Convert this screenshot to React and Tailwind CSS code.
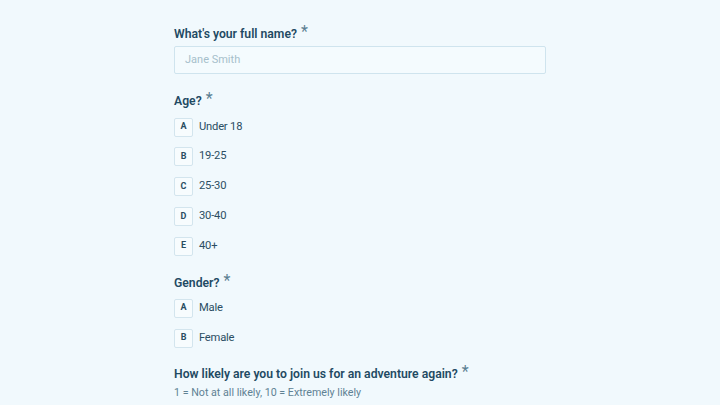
import React from "react";

function Heading({ children, className = "" }) {
  return (
    <div className={"flex items-start h-5 text-[12.2px] leading-5 font-semibold text-[#1f4a63] " + className}>
      <span>{children}</span>
      <span className="ml-[4px] text-[16px] leading-[16px] text-[#5b7f92] font-normal">*</span>
    </div>
  );
}

function Option({ letter, label }) {
  return (
    <div className="flex items-center h-[18px]">
      <div className="w-[19px] h-[19px] flex items-center justify-center border border-[#d3e5ee] bg-[#f7fcfe] rounded-[2px] text-[9px] font-bold text-[#2a4d62]">
        {letter}
      </div>
      <span className="ml-[6px] text-[11.2px] tracking-[-0.2px] text-[#2b4e63]">{label}</span>
    </div>
  );
}

export default function App() {
  return (
    <div className="w-[720px] h-[405px] overflow-hidden bg-[#f1f9fd]" style={{ fontFamily: "Roboto, 'Noto Sans', sans-serif" }}>
      <div className="ml-[174px] w-[372px] pt-[24px]">
        <Heading>What's your full name?</Heading>
        <div className="mt-[2px] h-[28px] w-[372px] border border-[#cfe4ee] bg-[#f4fbfe] rounded-[2px] flex items-center px-[10px] text-[11px] text-[#a6bfcb]">
          Jane Smith
        </div>
        <Heading className="mt-[17px]">Age?</Heading>
        <div className="mt-[7px] flex flex-col gap-[11.75px]">
          <Option letter="A" label="Under 18" />
          <Option letter="B" label="19-25" />
          <Option letter="C" label="25-30" />
          <Option letter="D" label="30-40" />
          <Option letter="E" label="40+" />
        </div>
        <Heading className="mt-[18px]">Gender?</Heading>
        <div className="mt-[6px] flex flex-col gap-[12px]">
          <Option letter="A" label="Male" />
          <Option letter="B" label="Female" />
        </div>
        <Heading className="mt-[17px]">How likely are you to join us for an adventure again?</Heading>
        <div className="mt-[1px] text-[10.7px] leading-4 text-[#5f8294]">1 = Not at all likely, 10 = Extremely likely</div>
      </div>
    </div>
  );
}
